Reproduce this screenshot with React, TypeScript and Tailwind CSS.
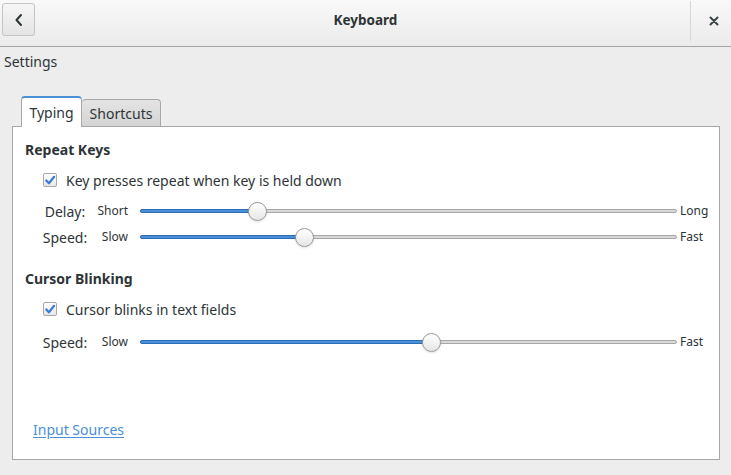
import React from 'react';

const font = { fontFamily: '"Noto Sans", "DejaVu Sans", sans-serif' };

function Check() {
  return (
    <div className="w-[14px] h-[14px] rounded-[2px] border border-[#a8a8a8] bg-gradient-to-b from-[#ffffff] to-[#e8e8e8] flex items-center justify-center">
      <svg width="13" height="13" viewBox="0 0 13 13">
        <path d="M2.5 6.5 L5.3 9.5 L11 2.5" fill="none" stroke="#3a7bd5" strokeWidth="2.4" strokeLinecap="round" strokeLinejoin="round" />
      </svg>
    </div>
  );
}

function Slider({ value }: { value: number }) {
  return (
    <div className="relative flex-1 h-[20px] flex items-center">
      <div className="w-full h-[4px] rounded-full bg-[#d8d8d8] border border-[#a8a8a8]" />
      <div
        className="absolute left-0 h-[4px] rounded-full bg-[#4a90d9] border border-[#2e6bb5]"
        style={{ width: `${value}%` }}
      />
      <div
        className="absolute w-[19px] h-[19px] -ml-[9px] rounded-full border border-[#9a9a9a] bg-gradient-to-b from-[#ffffff] to-[#e6e6e6] shadow-sm"
        style={{ left: `${value}%` }}
      />
    </div>
  );
}

function SliderRow({ label, min, max, value }: { label: string; min: string; max: string; value: number }) {
  return (
    <div className="flex items-center h-[26px]">
      <div className="w-[50px] ml-[27px] text-center text-[14px] text-[#2e3436]">{label}</div>
      <div className="w-[38px] text-right text-[12px] text-[#2e3436]">{min}</div>
      <div className="w-[12px]" />
      <Slider value={value} />
      <div className="w-[42px] pl-[3px] text-[12px] text-[#2e3436]">{max}</div>
    </div>
  );
}

export default function App() {
  return (
    <div className="w-[731px] h-[475px] bg-[#ededed] overflow-hidden text-[#2e3436]" style={font}>
      {/* Header bar */}
      <div className="h-[47px] flex items-stretch bg-gradient-to-b from-[#f9f9f9] to-[#ebebeb] border-b border-[#a4a4a4]">
        <div className="pl-[2px] pt-[3px]">
          <div className="w-[33px] h-[33px] rounded-[3px] border border-[#c4c4c4] bg-gradient-to-b from-[#f6f6f6] to-[#e4e4e4] flex items-center justify-center">
            <svg width="12" height="14" viewBox="0 0 12 14">
              <path d="M8 2 L3.5 7 L8 12" fill="none" stroke="#2e3436" strokeWidth="2" strokeLinecap="round" strokeLinejoin="round" />
            </svg>
          </div>
        </div>
        <div className="flex-1 flex items-center justify-center pb-[5px] pl-[6px] text-[13.5px] font-bold">Keyboard</div>
        <div className="w-[41px] border-l border-[#d6d6d6] my-[1px] mb-[5px] pl-[6px] flex items-center justify-center">
          <svg width="10" height="10" viewBox="0 0 10 10">
            <path d="M1.5 1.5 L8.5 8.5 M8.5 1.5 L1.5 8.5" stroke="#3a4447" strokeWidth="2" strokeLinecap="round" />
          </svg>
        </div>
      </div>

      <div className="pl-[4px] pt-[6px] text-[14px] leading-[18px]">Settings</div>

      {/* Tabs */}
      <div className="flex items-end ml-[21px] mt-[24px] h-[31px]">
        <div className="h-[31px] w-[61px] -mb-[1px] z-10 relative bg-white border border-[#a8a8a8] border-b-0 border-t-[2px] border-t-[#4a90d9] rounded-t-[4px] flex items-center justify-center text-[14px]">
          Typing
        </div>
        <div className="h-[27px] w-[79px] bg-gradient-to-b from-[#e4e4e4] to-[#d4d4d4] border border-[#a8a8a8] border-b-0 border-l-0 rounded-t-[4px] flex items-center justify-center text-[14px]">
          Shortcuts
        </div>
      </div>

      {/* Panel */}
      <div className="ml-[12px] w-[708px] h-[334px] bg-white border border-[#a8a8a8] flex flex-col">
        <div className="pl-[12px] pt-[14px] text-[14px] font-bold leading-[18px]">Repeat Keys</div>
        <div className="flex items-center gap-[9px] pl-[30px] mt-[11px] h-[20px]">
          <Check />
          <span className="text-[14px]">Key presses repeat when key is held down</span>
        </div>
        <div className="mt-[8px]">
          <SliderRow label="Delay:" min="Short" max="Long" value={21.8} />
          <SliderRow label="Speed:" min="Slow" max="Fast" value={30.5} />
        </div>

        <div className="pl-[12px] pt-[20px] text-[14px] font-bold leading-[18px]">Cursor Blinking</div>
        <div className="flex items-center gap-[9px] pl-[30px] mt-[11px] h-[20px]">
          <Check />
          <span className="text-[14px]">Cursor blinks in text fields</span>
        </div>
        <div className="mt-[10px]">
          <SliderRow label="Speed:" min="Slow" max="Fast" value={54.2} />
        </div>

        <div className="mt-auto mb-[18px] pl-[20px]">
          <span className="text-[14px] text-[#4a90d9] underline underline-offset-2">Input Sources</span>
        </div>
      </div>
    </div>
  );
}
